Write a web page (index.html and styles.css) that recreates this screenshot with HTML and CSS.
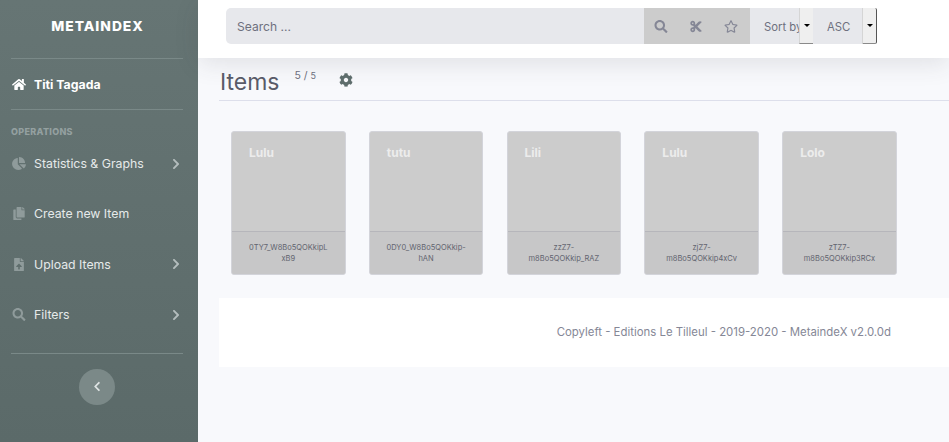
FILE: index.html
```html
<!DOCTYPE html>
<html lang="en">
<head>
    <meta charset="UTF-8">
    <title>MetaindeX</title>
    <link rel="stylesheet" href="styles.css">
</head>
<body>
    <div class="wrapper">
        <nav class="sidebar">
            <div class="brand">METAINDEX</div>
            <hr class="divider">
            <a class="nav-link nav-current">
                <svg class="nav-icon" viewBox="0 0 576 512"><path d="M280.37 148.26L96 300.11V464a16 16 0 0 0 16 16l112.06-.29a16 16 0 0 0 15.92-16V368a16 16 0 0 1 16-16h64a16 16 0 0 1 16 16v95.64a16 16 0 0 0 16 16.05L464 480a16 16 0 0 0 16-16V300L295.67 148.26a12.19 12.19 0 0 0-15.3 0zM571.6 251.47L488 182.56V44.05a12 12 0 0 0-12-12h-56a12 12 0 0 0-12 12v72.61L318.47 43a48 48 0 0 0-61 0L4.34 251.47a12 12 0 0 0-1.6 16.9l25.5 31A12 12 0 0 0 45.15 301l235.22-193.74a12.19 12.19 0 0 1 15.3 0L530.9 301a12 12 0 0 0 16.9-1.6l25.5-31a12 12 0 0 0-1.7-16.93z"/></svg>
                <span>Titi Tagada</span>
            </a>
            <hr class="divider">
            <div class="nav-heading">OPERATIONS</div>
            <a class="nav-link nav-item">
                <svg class="nav-icon" viewBox="0 0 544 512"><path d="M527.79 288H290.5l158.03 158.03c6.04 6.04 15.98 6.53 22.19.68 38.7-36.46 65.32-85.61 73.13-140.86 1.34-9.46-6.51-17.85-16.06-17.85zm-15.83-64.8C503.72 103.74 408.26 8.28 288.8.04 279.68-.59 272 7.1 272 16.24V240h223.77c9.14 0 16.82-7.68 16.19-16.8zM224 288V50.71c0-9.55-8.39-17.4-17.84-16.06C86.99 51.49-4.1 155.6.14 280.37 4.5 408.51 114.83 513.59 243.03 511.98c50.4-.63 96.97-16.87 135.26-44.03 7.9-5.6 8.42-17.23 1.57-24.08L224 288z"/></svg>
                <span>Statistics &amp; Graphs</span>
                <svg class="nav-arrow" viewBox="0 0 320 512"><path d="M285.476 272.971L91.132 467.314c-9.373 9.373-24.569 9.373-33.941 0l-22.667-22.667c-9.357-9.357-9.375-24.522-.04-33.901L188.505 256 34.484 101.255c-9.335-9.379-9.317-24.544.04-33.901l22.667-22.667c9.373-9.373 24.569-9.373 33.941 0L285.475 239.03c9.373 9.372 9.373 24.568.001 33.941z"/></svg>
            </a>
            <a class="nav-link nav-item">
                <svg class="nav-icon" viewBox="0 0 448 512"><path d="M320 448v40c0 13.255-10.745 24-24 24H24c-13.255 0-24-10.745-24-24V120c0-13.255 10.745-24 24-24h72v296c0 30.879 25.121 56 56 56h168zm0-344V0H152c-13.255 0-24 10.745-24 24v368c0 13.255 10.745 24 24 24h272c13.255 0 24-10.745 24-24V128H344c-13.2 0-24-10.8-24-24zm120.971-31.029L375.029 7.029A24 24 0 0 0 358.059 0H352v96h96v-6.059a24 24 0 0 0-7.029-16.97z"/></svg>
                <span>Create new Item</span>
            </a>
            <a class="nav-link nav-item">
                <svg class="nav-icon" viewBox="0 0 384 512"><path d="M224 136V0H24C10.7 0 0 10.7 0 24v464c0 13.3 10.7 24 24 24h336c13.3 0 24-10.7 24-24V160H248c-13.2 0-24-10.8-24-24zm65.18 216.01H224v80c0 8.84-7.16 16-16 16h-32c-8.84 0-16-7.16-16-16v-80H94.82c-14.28 0-21.41-17.29-11.27-27.36l96.42-95.7c6.65-6.61 17.39-6.61 24.04 0l96.42 95.7c10.15 10.07 3.03 27.36-11.25 27.36zM377 105L279.1 7c-4.5-4.5-10.6-7-17-7H256v128h128v-6.1c0-6.3-2.5-12.4-7-16.9z"/></svg>
                <span>Upload Items</span>
                <svg class="nav-arrow" viewBox="0 0 320 512"><path d="M285.476 272.971L91.132 467.314c-9.373 9.373-24.569 9.373-33.941 0l-22.667-22.667c-9.357-9.357-9.375-24.522-.04-33.901L188.505 256 34.484 101.255c-9.335-9.379-9.317-24.544.04-33.901l22.667-22.667c9.373-9.373 24.569-9.373 33.941 0L285.475 239.03c9.373 9.372 9.373 24.568.001 33.941z"/></svg>
            </a>
            <a class="nav-link nav-item">
                <svg class="nav-icon" viewBox="0 0 512 512"><path d="M505 442.7L405.3 343c-4.5-4.5-10.6-7-17-7H372c27.6-35.3 44-79.7 44-128C416 93.1 322.9 0 208 0S0 93.1 0 208s93.1 208 208 208c48.3 0 92.7-16.4 128-44v16.3c0 6.4 2.5 12.5 7 17l99.7 99.7c9.4 9.4 24.6 9.4 33.9 0l28.3-28.3c9.4-9.4 9.4-24.6.1-34zM208 336c-70.7 0-128-57.2-128-128 0-70.7 57.2-128 128-128 70.7 0 128 57.2 128 128 0 70.7-57.2 128-128 128z"/></svg>
                <span>Filters</span>
                <svg class="nav-arrow" viewBox="0 0 320 512"><path d="M285.476 272.971L91.132 467.314c-9.373 9.373-24.569 9.373-33.941 0l-22.667-22.667c-9.357-9.357-9.375-24.522-.04-33.901L188.505 256 34.484 101.255c-9.335-9.379-9.317-24.544.04-33.901l22.667-22.667c9.373-9.373 24.569-9.373 33.941 0L285.475 239.03c9.373 9.372 9.373 24.568.001 33.941z"/></svg>
            </a>
            <hr class="divider divider-bottom">
            <button class="sidebar-toggle" type="button">
                <svg viewBox="0 0 320 512"><path d="M34.52 239.03L228.87 44.69c9.37-9.37 24.57-9.37 33.94 0l22.67 22.67c9.36 9.36 9.37 24.52.04 33.9L131.49 256l154.02 154.75c9.34 9.38 9.32 24.54-.04 33.9l-22.67 22.67c-9.37 9.37-24.57 9.37-33.94 0L34.52 272.97c-9.37-9.37-9.37-24.57 0-33.94z"/></svg>
            </button>
        </nav>

        <div class="main">
            <header class="topbar">
                <div class="search-group">
                    <div class="search-input">Search ...</div>
                    <div class="search-tools">
                        <button class="tool" type="button"><svg viewBox="0 0 512 512"><path d="M505 442.7L405.3 343c-4.5-4.5-10.6-7-17-7H372c27.6-35.3 44-79.7 44-128C416 93.1 322.9 0 208 0S0 93.1 0 208s93.1 208 208 208c48.3 0 92.7-16.4 128-44v16.3c0 6.4 2.5 12.5 7 17l99.7 99.7c9.4 9.4 24.6 9.4 33.9 0l28.3-28.3c9.4-9.4 9.4-24.6.1-34zM208 336c-70.7 0-128-57.2-128-128 0-70.7 57.2-128 128-128 70.7 0 128 57.2 128 128 0 70.7-57.2 128-128 128z"/></svg></button>
                        <button class="tool" type="button"><svg viewBox="0 0 448 512"><path d="M278.06 256L444.48 89.57c4.69-4.69 4.69-12.29 0-16.97-32.8-32.8-85.99-32.8-118.79 0L210.18 188.12l-24.86-24.86c4.31-10.92 6.68-22.81 6.68-35.26 0-53.02-42.98-96-96-96S0 74.98 0 128s42.98 96 96 96c4.54 0 8.99-.32 13.36-.93L142.29 256l-32.93 32.93c-4.37-.61-8.82-.93-13.36-.93-53.02 0-96 42.98-96 96s42.98 96 96 96 96-42.98 96-96c0-12.45-2.37-24.34-6.68-35.26l24.86-24.86L325.69 439.4c32.8 32.8 85.99 32.8 118.79 0 4.69-4.68 4.69-12.28 0-16.97L278.06 256zM96 160c-17.64 0-32-14.36-32-32s14.36-32 32-32 32 14.36 32 32-14.36 32-32 32zm0 256c-17.64 0-32-14.36-32-32s14.36-32 32-32 32 14.36 32 32-14.36 32-32 32z"/></svg></button>
                        <button class="tool" type="button"><svg viewBox="0 0 576 512"><path d="M528.1 171.5L382 150.2 316.7 17.8c-11.7-23.6-45.6-23.9-57.4 0L194 150.2 47.9 171.5c-26.2 3.8-36.7 36.1-17.7 54.6l105.7 103-25 145.5c-4.5 26.3 23.2 46 46.4 33.7L288 439.6l130.7 68.7c23.2 12.2 50.9-7.4 46.4-33.7l-25-145.5 105.7-103c19-18.5 8.5-50.8-17.7-54.6zM388.6 312.3l23.7 138.4L288 385.4l-124.3 65.3 23.7-138.4-100.6-98 139-20.2 62.2-126 62.2 126 139 20.2-100.6 98z"/></svg></button>
                    </div>
                    <div class="sort-label">Sort by</div>
                    <button class="caret-btn" type="button"><span class="caret"></span></button>
                    <div class="sort-label">ASC</div>
                    <button class="caret-btn caret-last" type="button"><span class="caret"></span></button>
                </div>
            </header>

            <div class="content">
                <div class="page-head">
                    <h1>Items</h1>
                    <span class="count">5 / <small>5</small></span>
                    <svg class="settings" viewBox="0 0 512 512"><path d="M487.4 315.7l-42.6-24.6c4.3-23.2 4.3-47 0-70.2l42.6-24.6c4.9-2.8 7.1-8.6 5.5-14-11.1-35.6-30-67.8-54.7-94.6-3.8-4.1-10-5.1-14.8-2.3L380.8 110c-17.9-15.4-38.5-27.3-60.8-35.1V25.8c0-5.6-3.9-10.5-9.4-11.7-36.7-8.2-74.3-7.8-109.2 0-5.5 1.2-9.4 6.1-9.4 11.7V75c-22.2 7.9-42.8 19.8-60.8 35.1L88.7 85.5c-4.9-2.8-11-1.9-14.8 2.3-24.7 26.7-43.6 58.9-54.7 94.6-1.7 5.4.6 11.2 5.5 14L67.3 221c-4.3 23.2-4.3 47 0 70.2l-42.6 24.6c-4.9 2.8-7.1 8.6-5.5 14 11.1 35.6 30 67.8 54.7 94.6 3.8 4.1 10 5.1 14.8 2.3l42.6-24.6c17.9 15.4 38.5 27.3 60.8 35.1v49.2c0 5.6 3.9 10.5 9.4 11.7 36.7 8.2 74.3 7.8 109.2 0 5.5-1.2 9.4-6.1 9.4-11.7v-49.2c22.2-7.9 42.8-19.8 60.8-35.1l42.6 24.6c4.9 2.8 11 1.9 14.8-2.3 24.7-26.7 43.6-58.9 54.7-94.6 1.5-5.5-.7-11.3-5.6-14.1zM256 336c-44.1 0-80-35.9-80-80s35.9-80 80-80 80 35.9 80 80-35.9 80-80 80z"/></svg>
                </div>

                <div class="cards">
                    <div class="card">
                        <div class="card-title">Lulu</div>
                        <div class="card-id">0TY7_W8Bo5QOKkipLxB9</div>
                    </div>
                    <div class="card">
                        <div class="card-title">tutu</div>
                        <div class="card-id">0DY0_W8Bo5QOKkip-hAN</div>
                    </div>
                    <div class="card">
                        <div class="card-title">Lili</div>
                        <div class="card-id">zzZ7-m8Bo5QOKkip_RAZ</div>
                    </div>
                    <div class="card">
                        <div class="card-title">Lulu</div>
                        <div class="card-id">zjZ7-m8Bo5QOKkip4xCv</div>
                    </div>
                    <div class="card">
                        <div class="card-title">Lolo</div>
                        <div class="card-id">zTZ7-m8Bo5QOKkip3RCx</div>
                    </div>
                </div>

                <footer class="footer">Copyleft - Editions Le Tilleul - 2019-2020 - MetaindeX v2.0.0d</footer>
            </div>
        </div>
    </div>
</body>
</html>
```

FILE: styles.css
```css
* {
    box-sizing: border-box;
}

body {
    margin: 0;
    height: 442px;
    overflow: hidden;
    font-family: Inter, 'Noto Sans', sans-serif;
    background-color: #f8f9fc;
    color: #858796;
}

.wrapper {
    display: flex;
    height: 442px;
}

/* sidebar */
.sidebar {
    width: 198px;
    flex-shrink: 0;
    padding: 0 15px 0 11px;
    display: flex;
    flex-direction: column;
    background: linear-gradient(180deg, #667574 0%, #5b6a69 100%);
}

.brand {
    height: 58px;
    padding-top: 18px;
    padding-left: 1px;
    text-align: center;
    color: #fff;
    font-size: 13.8px;
    line-height: 17px;
    font-weight: 800;
    letter-spacing: 1px;
}

.divider {
    width: 100%;
    height: 1px;
    margin: 0;
    border: none;
    background-color: #7a8988;
}

.nav-link {
    display: flex;
    align-items: center;
    font-size: 12.3px;
    color: #e6eaea;
}

.nav-current {
    height: 50px;
    color: #fff;
    font-weight: 700;
}

.nav-heading {
    padding-top: 16px;
    height: 28.5px;
    font-size: 9px;
    line-height: 12px;
    font-weight: 800;
    letter-spacing: 0.3px;
    color: #94a0a0;
}

.nav-item {
    height: 50.3px;
}

.nav-icon {
    width: 14px;
    height: 13px;
    margin-left: 1px;
    margin-right: 8px;
    fill: #8f9b9b;
    flex-shrink: 0;
}

.nav-current .nav-icon {
    fill: #fff;
}

.nav-arrow {
    width: 8px;
    height: 12px;
    margin-left: auto;
    margin-right: 3px;
    fill: #b4bdbd;
}

.divider-bottom {
    margin-top: 12.9px;
}

.sidebar-toggle {
    width: 36px;
    height: 36px;
    margin: 15px auto 0;
    padding: 0;
    border: none;
    border-radius: 50%;
    background-color: #7b8988;
    display: flex;
    align-items: center;
    justify-content: center;
}

.sidebar-toggle svg {
    width: 8px;
    height: 11px;
    fill: #dfe4e4;
}

/* top bar */
.main {
    flex: 1;
    min-width: 0;
}

.topbar {
    height: 58px;
    padding: 8px 28px;
    background-color: #fff;
    box-shadow: 0 6px 24px rgba(58, 59, 69, 0.12);
    position: relative;
}

.search-group {
    display: flex;
    width: 651px;
    height: 36px;
}

.search-input {
    flex: 1;
    padding-left: 11px;
    line-height: 37px;
    font-size: 12.1px;
    color: #6e707e;
    background-color: #e7e8ec;
    border-radius: 5px 0 0 5px;
}

.search-tools {
    display: flex;
    width: 106px;
    padding-right: 2px;
    background-color: #cccccc;
}

.tool {
    flex: 1;
    padding: 0;
    border: none;
    background: none;
    display: flex;
    align-items: center;
    justify-content: center;
}

.tool svg {
    width: 14px;
    height: 13px;
    fill: #858796;
}

.sort-label {
    width: 49px;
    padding-left: 14px;
    overflow: hidden;
    white-space: nowrap;
    line-height: 38px;
    font-size: 11.3px;
    color: #6e707e;
    background-color: #e7e8ec;
}

.caret-btn {
    width: 14px;
    padding: 0;
    border: none;
    border-left: 1px solid #d5d5d5;
    border-bottom: 1px solid #8a8a8a;
    background-color: #efefef;
    display: flex;
    align-items: center;
    justify-content: center;
}

.caret-last {
    width: 15px;
    border-right: 1px solid #555;
    border-radius: 0 2px 2px 0;
}

.caret {
    width: 0;
    height: 0;
    border-left: 3px solid transparent;
    border-right: 3px solid transparent;
    border-top: 3px solid #000;
}

/* content */
.content {
    padding-left: 21px;
}

.page-head {
    height: 43px;
    display: flex;
    align-items: flex-start;
    border-bottom: 1px solid #dddfeb;
}

.page-head h1 {
    margin: 9px 0 0 1px;
    font-size: 23px;
    line-height: 30px;
    font-weight: 400;
    color: #5a5c69;
}

.count {
    margin: 11px 0 0 15px;
    font-size: 10.5px;
    line-height: 13px;
    color: #6e707e;
}

.count small {
    font-size: 9px;
}

.settings {
    width: 14px;
    height: 14px;
    margin: 15px 0 0 23px;
    fill: #5f6e6d;
}

.cards {
    display: flex;
    gap: 23.2px;
    padding: 30px 0 0 12px;
}

.card {
    width: 114.6px;
    height: 144px;
    flex-shrink: 0;
    display: flex;
    flex-direction: column;
    background-color: #cccccc;
    border: 1px solid #d3d4da;
    border-radius: 3px;
    overflow: hidden;
}

.card-title {
    height: 100px;
    padding: 13px 0 0 17px;
    font-size: 12px;
    line-height: 16px;
    font-weight: 700;
    color: #ececec;
    border-bottom: 1px solid #b6b6bb;
}

.card-id {
    flex: 1;
    padding: 10px 16px 0;
    text-align: center;
    font-size: 7.5px;
    line-height: 11px;
    color: #62646f;
    background-color: #c7c7c8;
    overflow-wrap: anywhere;
}

.footer {
    height: 69px;
    margin-top: 23px;
    padding: 27px 58px 0 0;
    text-align: right;
    font-size: 11.4px;
    line-height: 14px;
    color: #858796;
    background-color: #fff;
}
```
